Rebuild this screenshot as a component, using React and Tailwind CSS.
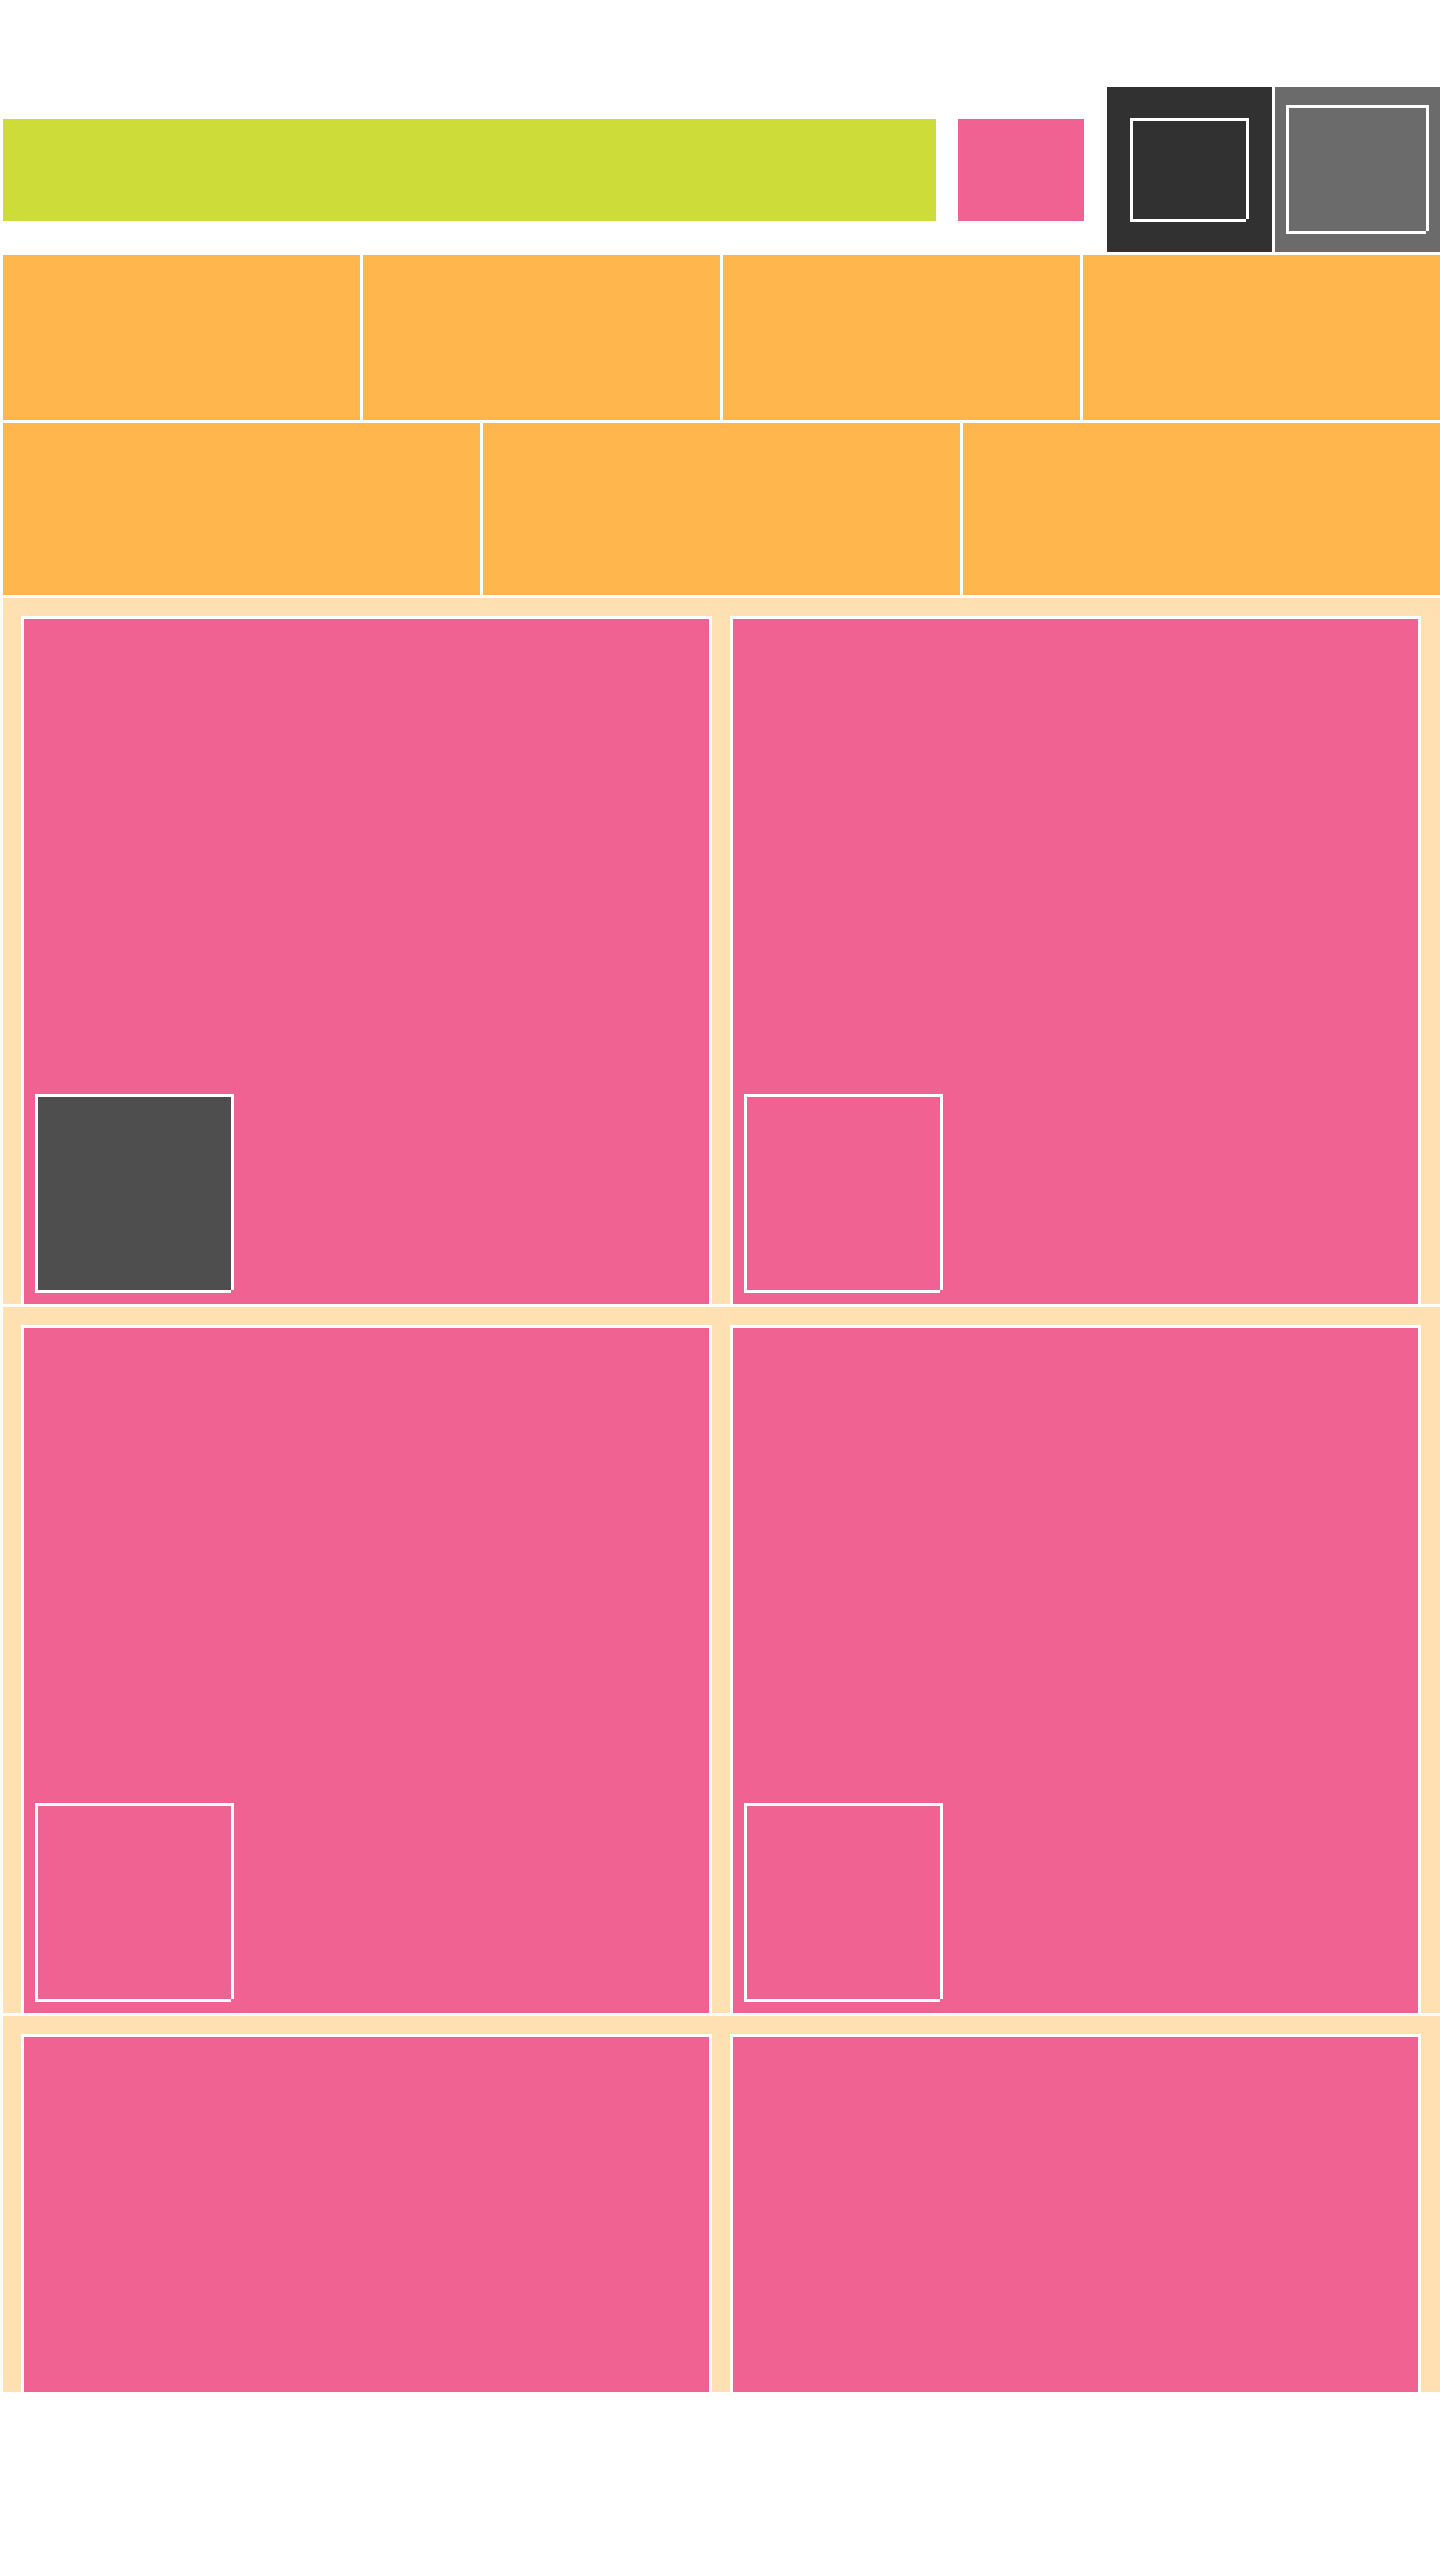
import React from "react";

function Notch({ color }) {
  return <span className={`absolute -right-[3px] -bottom-[3px] w-[3px] h-[3px] ${color}`} />;
}

function Card({ dark }) {
  return (
    <div className="w-[691px] h-[688px] shrink-0 border-t-[3px] border-x-[3px] border-white bg-[#f06292] flex flex-col justify-end p-[11px]">
      <div className={`relative w-[199px] h-[199px] border-[3px] border-white ${dark ? "bg-[#4e4e4e]" : "bg-[#f06292]"}`}>
        <Notch color="bg-[#f06292]" />
      </div>
    </div>
  );
}

function CardRow({ h, darkFirst }) {
  return (
    <div className={`ml-[3px] w-[1437px] ${h} overflow-hidden bg-[#ffe0b2] pt-[18px] pl-[18px] flex gap-[18px] items-start`}>
      <Card dark={darkFirst} />
      <Card />
    </div>
  );
}

export default function App() {
  return (
    <div className="w-[1440px] min-h-[2560px] bg-white font-['Liberation_Sans',sans-serif]">
      <div className="h-[87px]" />
      <div className="flex flex-col gap-[3px]">
        {/* header */}
        <div className="h-[165px] flex items-center pl-[3px]">
          <div className="w-[933px] h-[102px] bg-[#cddc39]" />
          <div className="ml-[22px] w-[126px] h-[102px] bg-[#f06292]" />
          <div className="ml-[23px] w-[165px] h-[165px] bg-[#313131] flex items-center justify-center">
            <div className="relative w-[119px] h-[104px] border-[3px] border-white">
              <Notch color="bg-[#313131]" />
            </div>
          </div>
          <div className="ml-[3px] w-[165px] h-[165px] bg-[#6b6b6b] flex items-center justify-center">
            <div className="relative w-[143px] h-[129px] border-[3px] border-white">
              <Notch color="bg-[#6b6b6b]" />
            </div>
          </div>
        </div>

        {/* orange row 1 */}
        <div className="h-[165px] pl-[3px] grid grid-cols-4 gap-[3px]">
          <div className="bg-[#ffb74d]" />
          <div className="bg-[#ffb74d]" />
          <div className="bg-[#ffb74d]" />
          <div className="bg-[#ffb74d]" />
        </div>

        {/* orange row 2 */}
        <div className="h-[172px] pl-[3px] grid grid-cols-3 gap-[3px]">
          <div className="bg-[#ffb74d]" />
          <div className="bg-[#ffb74d]" />
          <div className="bg-[#ffb74d]" />
        </div>

        <CardRow h="h-[706px]" darkFirst />
        <CardRow h="h-[706px]" />
        <CardRow h="h-[376px]" />
      </div>
    </div>
  );
}
